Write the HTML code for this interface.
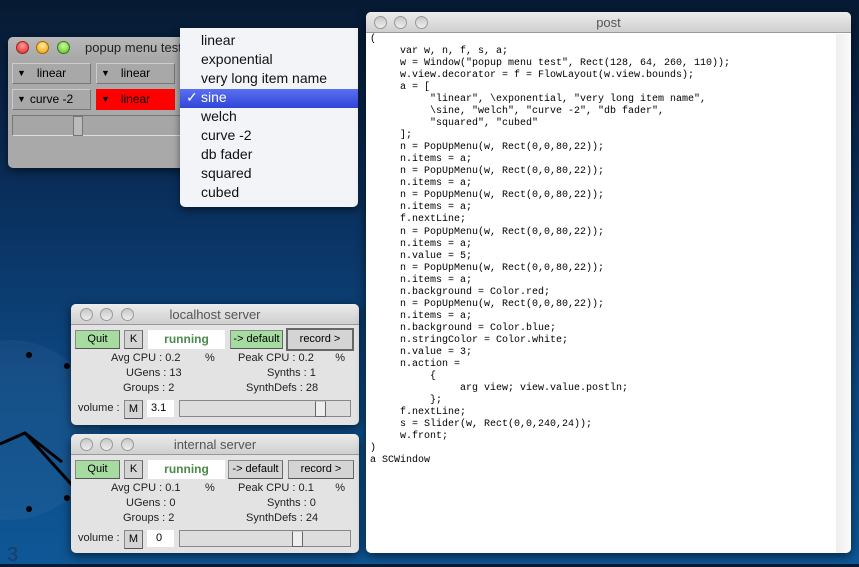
<!DOCTYPE html><html><head><meta charset="utf-8"><style>
*{box-sizing:border-box;margin:0;padding:0}
body{width:859px;height:564px;overflow:hidden;position:relative;font-family:"Liberation Sans",sans-serif;
background:linear-gradient(180deg,#071a33 0%,#0a2f5c 35%,#0d4a85 70%,#0e5796 100%);}
.abs{position:absolute}
.win{position:absolute;border-radius:5px;overflow:hidden;box-shadow:0 3px 10px rgba(0,0,0,.6)}
.tb{height:21px;background:linear-gradient(#ececec,#cfcfcf);border-bottom:1px solid #999;position:relative;font-size:13px;color:#555;text-align:center;line-height:21px}
.dot{position:absolute;top:4px;width:13px;height:13px;border-radius:50%;background:linear-gradient(#c8c8c8,#eee);border:1px solid #999}
.btn{position:absolute;font-size:11px;text-align:center;border:1px solid #888;border-right-color:#666;border-bottom-color:#555;background:#d4d4d4;line-height:17px;height:19px}
.lbl{position:absolute;font-size:11px;color:#222}
.pu{position:absolute;height:21px;width:79px;border:1px solid #777;border-top-color:#ccc;border-left-color:#ccc;background:#a8a8a8;font-size:12px;line-height:19px;text-align:center}
.pu b{position:absolute;left:4px;font-size:9px;font-weight:normal}
pre{font-family:"Liberation Mono",monospace;font-size:10px;line-height:12.03px;color:#000}
.mi{position:absolute;left:21px;font-size:14px;color:#111}
</style></head><body>
<!-- clock -->
<div class="abs" style="left:-80px;top:340px;width:180px;height:180px;border-radius:50%;background:rgba(255,255,255,.04)"></div>
<div class="abs" style="left:26px;top:352px;width:6px;height:6px;border-radius:50%;background:#000"></div>
<div class="abs" style="left:64px;top:363px;width:6px;height:6px;border-radius:50%;background:#000"></div>
<div class="abs" style="left:64px;top:495px;width:6px;height:6px;border-radius:50%;background:#000"></div>
<div class="abs" style="left:26px;top:506px;width:6px;height:6px;border-radius:50%;background:#000"></div>
<svg class="abs" style="left:0;top:400px" width="80" height="100"><path d="M0 44 L25 33 L62 62 M25 33 L72 85" stroke="#000" stroke-width="3" fill="none"/></svg>
<div class="abs" style="left:7px;top:544px;font-size:20px;color:#1d3c66">3</div>

<!-- popup window -->
<div class="win" style="left:8px;top:37px;width:180px;height:131px;background:#a9a9a9">
<div class="tb" style="text-align:left;padding-left:77px;color:#222;background:linear-gradient(#b8b8b8,#a9a9a9);border-bottom:none">popup menu test
<div class="dot" style="left:8px;background:radial-gradient(circle at 50% 35%,#f99,#d22);border-color:#922"></div>
<div class="dot" style="left:28px;background:radial-gradient(circle at 50% 35%,#fe9,#e90);border-color:#a60"></div>
<div class="dot" style="left:49px;background:radial-gradient(circle at 50% 35%,#cf9,#5b2);border-color:#372"></div></div>
<div class="pu" style="left:4px;top:26px"><b>▼</b>linear</div>
<div class="pu" style="left:88px;top:26px"><b>▼</b>linear</div>
<div class="pu" style="left:4px;top:52px"><b>▼</b>curve -2</div>
<div class="pu" style="left:88px;top:52px;background:#f00;border-color:#f00"><b>▼</b>linear</div>
<div class="abs" style="left:4px;top:78px;width:176px;height:21px;border:1px solid #777;border-bottom-color:#ddd;background:#a6a6a6"></div>
<div class="abs" style="left:65px;top:79px;width:10px;height:20px;background:#bbb;border:1px solid #777"></div>
</div>
<!-- menu -->
<div class="abs" style="left:180px;top:28px;width:178px;height:179px;background:#f2f4f7;border-radius:0 0 5px 5px;box-shadow:0 3px 8px rgba(0,0,0,.5)">
<div class="abs" style="left:0;top:61px;width:178px;height:19px;background:linear-gradient(#5a70f0,#2f45d8)"></div>
<div class="mi" style="top:4px">linear</div>
<div class="mi" style="top:23px">exponential</div>
<div class="mi" style="top:42px">very long item name</div>
<div class="mi" style="top:61px;color:#fff"><span style="position:absolute;left:-15px">✓</span>sine</div>
<div class="mi" style="top:80px">welch</div>
<div class="mi" style="top:99px">curve -2</div>
<div class="mi" style="top:118px">db fader</div>
<div class="mi" style="top:137px">squared</div>
<div class="mi" style="top:156px">cubed</div>
</div>

<!-- servers -->
<div class="win" style="left:71px;top:304px;width:288px;height:121px;background:#e3e3e3">
<div class="tb">localhost server<div class="dot" style="left:9px"></div><div class="dot" style="left:29px"></div><div class="dot" style="left:50px"></div></div>
<div class="btn" style="left:4px;top:26px;width:45px;background:#a6dca0">Quit</div>
<div class="btn" style="left:53px;top:26px;width:19px">K</div>
<div class="abs" style="left:77px;top:26px;width:77px;height:19px;background:#fff;color:#4a8a4a;font-weight:bold;font-size:12px;text-align:center;line-height:19px">running</div>
<div class="btn" style="left:159px;top:26px;width:53px;background:#a6dca0">-&gt; default</div>
<div class="btn" style="left:215px;top:24px;width:68px;height:23px;border:2px solid #666;line-height:19px">record &gt;</div>
<div class="lbl" style="left:40px;top:48px">Avg CPU : 0.2 &nbsp; &nbsp; &nbsp; &nbsp;%</div>
<div class="lbl" style="left:167px;top:48px">Peak CPU : 0.2 &nbsp; &nbsp; &nbsp; %</div>
<div class="lbl" style="left:55px;top:63px">UGens : 13</div>
<div class="lbl" style="left:196px;top:63px">Synths : 1</div>
<div class="lbl" style="left:52px;top:78px">Groups : 2</div>
<div class="lbl" style="left:175px;top:78px">SynthDefs : 28</div>
<div class="lbl" style="left:7px;top:98px">volume :</div>
<div class="btn" style="left:53px;top:96px;width:19px">M</div>
<div class="abs" style="left:76px;top:96px;width:27px;height:17px;background:#fff;font-size:11px;padding-left:4px;line-height:17px">3.1</div>
<div class="abs" style="left:108px;top:96px;width:172px;height:17px;border:1px solid #888;background:#ddd"></div>
<div class="abs" style="left:244px;top:97px;width:11px;height:16px;background:#eee;border:1px solid #666;border-top-color:#ccc"></div>
</div>
<div class="win" style="left:71px;top:434px;width:288px;height:119px;background:#e3e3e3">
<div class="tb">internal server<div class="dot" style="left:9px"></div><div class="dot" style="left:29px"></div><div class="dot" style="left:50px"></div></div>
<div class="btn" style="left:4px;top:26px;width:45px;background:#a6dca0">Quit</div>
<div class="btn" style="left:53px;top:26px;width:19px">K</div>
<div class="abs" style="left:77px;top:26px;width:77px;height:19px;background:#fff;color:#4a8a4a;font-weight:bold;font-size:12px;text-align:center;line-height:19px">running</div>
<div class="btn" style="left:157px;top:26px;width:55px">-&gt; default</div>
<div class="btn" style="left:217px;top:26px;width:66px">record &gt;</div>
<div class="lbl" style="left:40px;top:48px">Avg CPU : 0.1 &nbsp; &nbsp; &nbsp; &nbsp;%</div>
<div class="lbl" style="left:167px;top:48px">Peak CPU : 0.1 &nbsp; &nbsp; &nbsp; %</div>
<div class="lbl" style="left:55px;top:63px">UGens : 0</div>
<div class="lbl" style="left:196px;top:63px">Synths : 0</div>
<div class="lbl" style="left:52px;top:78px">Groups : 2</div>
<div class="lbl" style="left:175px;top:78px">SynthDefs : 24</div>
<div class="lbl" style="left:7px;top:98px">volume :</div>
<div class="btn" style="left:53px;top:96px;width:19px">M</div>
<div class="abs" style="left:76px;top:96px;width:27px;height:17px;background:#fff;font-size:11px;padding-left:9px;line-height:17px">0</div>
<div class="abs" style="left:108px;top:96px;width:172px;height:17px;border:1px solid #888;background:#ddd"></div>
<div class="abs" style="left:221px;top:97px;width:11px;height:16px;background:#eee;border:1px solid #666;border-top-color:#ccc"></div>
</div>

<!-- post -->
<div class="win" style="left:366px;top:12px;width:485px;height:541px;background:#fff">
<div class="tb">post<div class="dot" style="left:8px"></div><div class="dot" style="left:28px"></div><div class="dot" style="left:49px"></div></div>
<div class="abs" style="right:0;top:22px;width:15px;height:519px;background:linear-gradient(90deg,#eee,#fafafa)"></div>
<pre class="abs" style="left:4px;top:22px">(
     var w, n, f, s, a;
     w = Window("popup menu test", Rect(128, 64, 260, 110));
     w.view.decorator = f = FlowLayout(w.view.bounds);
     a = [
          "linear", \exponential, "very long item name",
          \sine, "welch", "curve -2", "db fader",
          "squared", "cubed"
     ];
     n = PopUpMenu(w, Rect(0,0,80,22));
     n.items = a;
     n = PopUpMenu(w, Rect(0,0,80,22));
     n.items = a;
     n = PopUpMenu(w, Rect(0,0,80,22));
     n.items = a;
     f.nextLine;
     n = PopUpMenu(w, Rect(0,0,80,22));
     n.items = a;
     n.value = 5;
     n = PopUpMenu(w, Rect(0,0,80,22));
     n.items = a;
     n.background = Color.red;
     n = PopUpMenu(w, Rect(0,0,80,22));
     n.items = a;
     n.background = Color.blue;
     n.stringColor = Color.white;
     n.value = 3;
     n.action =
          {
               arg view; view.value.postln;
          };
     f.nextLine;
     s = Slider(w, Rect(0,0,240,24));
     w.front;
)
a SCWindow</pre>
</div>
</body></html>
